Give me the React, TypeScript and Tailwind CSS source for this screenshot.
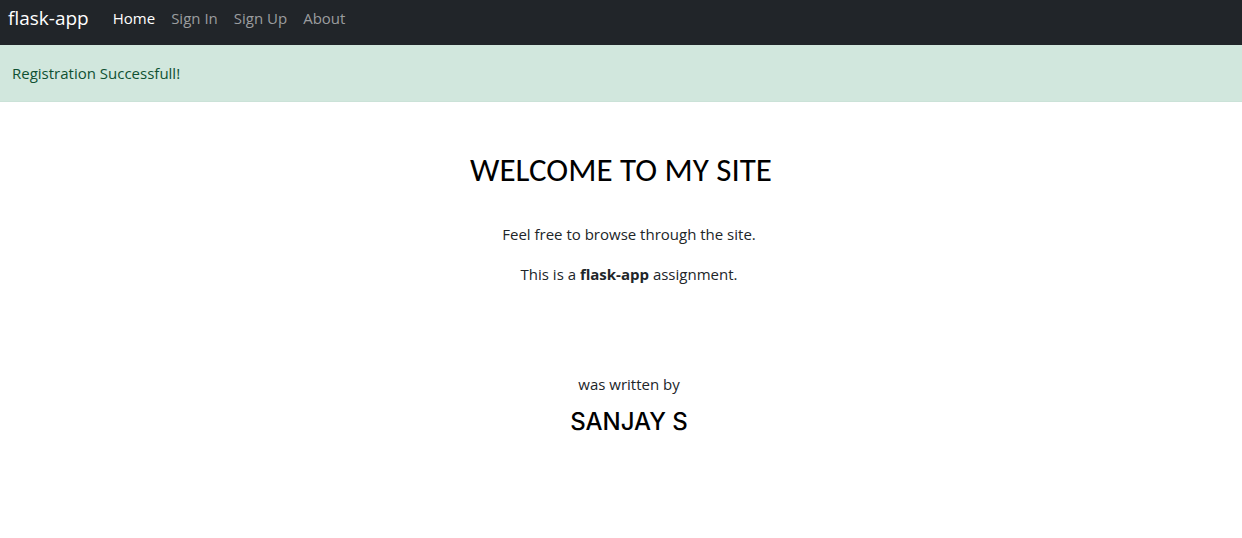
const links = [
  { label: "Home", active: true },
  { label: "Sign In", active: false },
  { label: "Sign Up", active: false },
  { label: "About", active: false },
];

export default function App() {
  return (
    <div className="min-h-screen bg-white font-['Segoe_UI','Open_Sans',sans-serif] text-[15px] leading-6 text-[#212529]">
      <nav className="flex items-center bg-[#212529] px-2 pt-1 pb-[13px]">
        <a href="#" className="mr-4 text-[19px] leading-7 text-white">flask-app</a>
        <ul className="flex">
          {links.map((link) => (
            <li key={link.label}>
              <a
                href="#"
                aria-current={link.active ? "page" : undefined}
                className={link.active ? "px-2 text-white" : "px-2 text-[#9b9d9f]"}
              >
                {link.label}
              </a>
            </li>
          ))}
        </ul>
      </nav>
      <div role="alert" className="border-b border-[#cbe2d8] bg-[#d1e7dd] px-3 py-4 text-[#0f5132]">
        Registration Successfull!
      </div>
      <main className="flex flex-col items-center pt-12 pl-4 text-center">
        <h1 className="mr-4 font-['Calibri','Lato',sans-serif] text-[33px] leading-10 text-black">
          WELCOME TO MY SITE
        </h1>
        <p className="mt-8">Feel free to browse through the site.</p>
        <p className="mt-4">
          This is a <strong className="font-bold">flask-app</strong> assignment.
        </p>
        <p className="mt-[86px]">was written by</p>
        <p className="mt-2 font-['Inter',sans-serif] text-2xl leading-9 font-medium text-black">SANJAY S</p>
      </main>
    </div>
  );
}
